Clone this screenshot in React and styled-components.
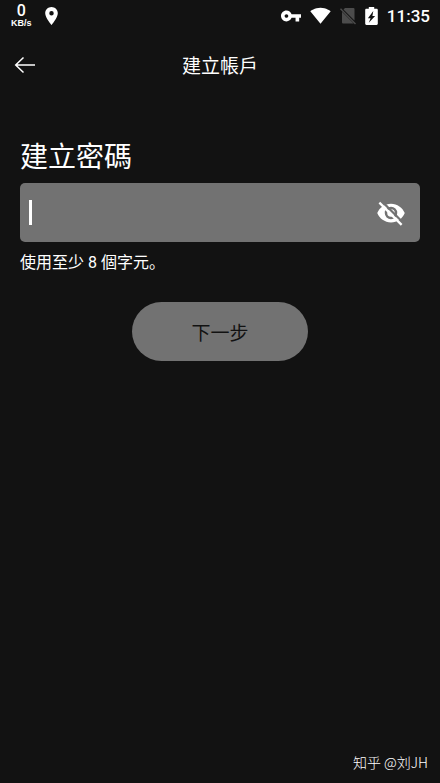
import React, { useState } from "react";
import styled, { createGlobalStyle } from "styled-components";

const GlobalStyle = createGlobalStyle`
  * { box-sizing: border-box; }
  body {
    margin: 0;
    background: #121212;
    color: #fff;
    font-family: Roboto, "Noto Sans CJK SC", sans-serif;
  }
  button, input { font: inherit; }
`;

const Screen = styled.div`
  min-height: 100vh;
  display: flex;
  flex-direction: column;
`;

const StatusBar = styled.div`
  height: 32px;
  padding: 0 10px 0 11px;
  display: flex;
  align-items: center;
  justify-content: space-between;
`;

const StatusGroup = styled.div`
  display: flex;
  align-items: center;
  gap: ${(p) => p.$gap}px;
`;

const NetSpeed = styled.div`
  display: flex;
  flex-direction: column;
  align-items: center;
`;

const SpeedValue = styled.span`
  font-size: 16px;
  line-height: 14px;
  font-weight: 500;
`;

const SpeedUnit = styled.span`
  font-family: "Liberation Sans", sans-serif;
  font-size: 9px;
  line-height: 10px;
  font-weight: 700;
`;

const Time = styled.time`
  font-size: 17px;
  line-height: 20px;
  font-weight: 500;
`;

const Header = styled.header`
  height: 66px;
  padding: 0 13px;
  display: grid;
  grid-template-columns: 24px 1fr 24px;
  align-items: center;
`;

const BackButton = styled.button`
  display: flex;
  padding: 0;
  border: 0;
  background: none;
  color: inherit;
  cursor: pointer;
`;

const Title = styled.h1`
  margin: 0;
  padding-top: 4px;
  font-size: 19px;
  line-height: 28px;
  font-weight: 400;
  text-align: center;
`;

const Form = styled.form`
  padding: 40px 20px 0;
  display: flex;
  flex-direction: column;
`;

const Label = styled.label`
  font-size: 28px;
  line-height: 40px;
  font-weight: 400;
`;

const Field = styled.div`
  position: relative;
  height: 59px;
  margin-top: 5px;
  padding: 0 14px 0 9px;
  display: flex;
  align-items: center;
  border-radius: 5px;
  background: #727272;
`;

const PasswordInput = styled.input`
  flex: 1;
  min-width: 0;
  height: 40px;
  padding: 0;
  border: 0;
  outline: 0;
  background: transparent;
  color: #fff;
  font-size: 20px;
  caret-color: ${(p) => (p.value ? "#fff" : "transparent")};
`;

const Caret = styled.span`
  position: absolute;
  left: 9px;
  top: 17px;
  width: 3px;
  height: 25px;
  background: #fff;
  pointer-events: none;
`;

const VisibilityButton = styled(BackButton)``;

const Hint = styled.p`
  margin: 9px 0 0;
  font-size: 16px;
  line-height: 24px;
`;

const NextButton = styled.button`
  align-self: center;
  width: 44%;
  height: 59px;
  margin-top: 27px;
  border: 0;
  border-radius: 30px;
  background: #727272;
  color: #121212;
  font-size: 19px;
`;

const Watermark = styled.footer`
  margin-top: auto;
  padding: 0 12px 11px;
  text-align: right;
  font-family: "Noto Sans CJK SC", sans-serif;
  font-size: 14px;
  line-height: 20px;
  font-weight: 300;
`;

function Icon({ size, width, height, viewBox = "0 0 24 24", children }) {
  return (
    <svg width={width || size} height={height || size} viewBox={viewBox} fill="currentColor" aria-hidden="true">
      {children}
    </svg>
  );
}

export default function App() {
  const [password, setPassword] = useState("");
  const [visible, setVisible] = useState(false);

  return (
    <Screen lang="zh-Hans">
      <GlobalStyle />
      <StatusBar>
        <StatusGroup $gap={13}>
          <NetSpeed>
            <SpeedValue>0</SpeedValue>
            <SpeedUnit>KB/s</SpeedUnit>
          </NetSpeed>
          <Icon width={13} height={18} viewBox="5 2 14 20">
            <path d="M12 2C8.13 2 5 5.13 5 9c0 5.25 7 13 7 13s7-7.75 7-13c0-3.87-3.13-7-7-7zm0 9.5a2.5 2.5 0 1 1 0-5 2.5 2.5 0 0 1 0 5z" />
          </Icon>
        </StatusGroup>
        <StatusGroup $gap={9}>
          <Icon width={20} height={12} viewBox="1 6 22 12">
            <path d="M12.65 10C11.83 7.67 9.61 6 7 6c-3.31 0-6 2.69-6 6s2.69 6 6 6c2.61 0 4.83-1.67 5.65-4H17v4h4v-4h2v-4H12.65zM7 14c-1.1 0-2-.9-2-2s.9-2 2-2 2 .9 2 2-.9 2-2 2z" />
          </Icon>
          <Icon width={21} height={18} viewBox="0 3 24 19">
            <path d="M12.01 21.49 23.64 7c-.45-.34-4.93-4-11.64-4C5.28 3 .81 6.66.36 7l11.63 14.49.01.01.01-.01z" />
          </Icon>
          <Icon width={16} height={18} viewBox="0 0 16 18">
            <path fill="#4c4c4c" d="M5 1h8.5a1 1 0 0 1 1 1v11.5L3.5 2.5zM2 4.8 13.7 16.5H3a1 1 0 0 1-1-1z" />
            <path d="M.5 1.8 15.5 17" stroke="#4c4c4c" strokeWidth="1.4" />
          </Icon>
          <Icon width={13} height={18} viewBox="5 2 14 20">
            <path
              fillRule="evenodd"
              d="M17.7 4H15V2H9v2H6.3C5.6 4 5 4.6 5 5.3v15.4c0 .7.6 1.3 1.3 1.3h11.4c.7 0 1.3-.6 1.3-1.3V5.3c0-.7-.6-1.3-1.3-1.3zM9 19.5l2-5H8l6-8-1 5.5h3z"
            />
          </Icon>
          <Time>11:35</Time>
        </StatusGroup>
      </StatusBar>

      <Header>
        <BackButton type="button" aria-label="返回">
          <Icon size={24}>
            <path d="M10.5 4.5 2.7 12l7.8 7.5M3 12h19" fill="none" stroke="currentColor" strokeWidth="1.5" />
          </Icon>
        </BackButton>
        <Title>建立帳戶</Title>
      </Header>

      <Form onSubmit={(e) => e.preventDefault()}>
        <Label htmlFor="password">建立密碼</Label>
        <Field>
          <PasswordInput
            id="password"
            type={visible ? "text" : "password"}
            value={password}
            onChange={(e) => setPassword(e.target.value)}
            aria-describedby="password-hint"
          />
          {!password && <Caret />}
          <VisibilityButton type="button" aria-label="顯示密碼" aria-pressed={visible} onClick={() => setVisible(!visible)}>
            <Icon size={30}>
              <path
                fillRule="evenodd"
                d="M12 4.5C7 4.5 2.73 7.61 1 12c1.73 4.39 6 7.5 11 7.5s9.27-3.11 11-7.5c-1.73-4.39-6-7.5-11-7.5zM12 17a5 5 0 1 1 0-10 5 5 0 0 1 0 10zM12 9a3 3 0 1 0 0 6 3 3 0 0 0 0-6z"
              />
              <path d="M4.5 2.5 22 20" stroke="#727272" strokeWidth="1.7" />
              <path d="M2.7 3.7 20.5 21.5" stroke="currentColor" strokeWidth="1.8" />
            </Icon>
          </VisibilityButton>
        </Field>
        <Hint id="password-hint">使用至少 8 個字元。</Hint>
        <NextButton type="submit">下一步</NextButton>
      </Form>

      <Watermark>知乎 @刘JH</Watermark>
    </Screen>
  );
}
